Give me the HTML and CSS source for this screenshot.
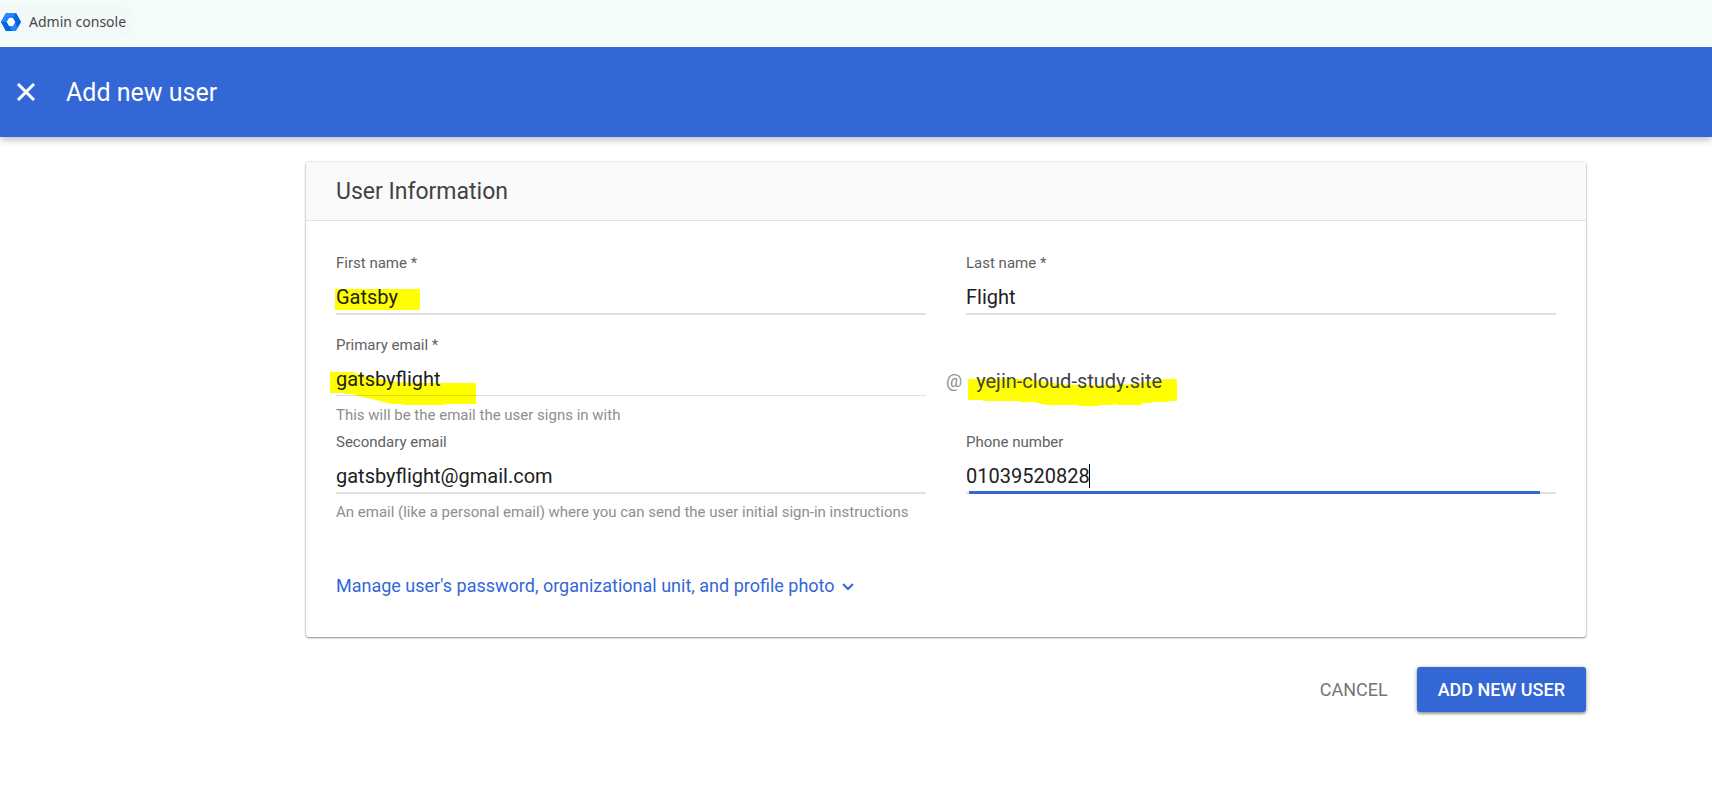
FILE: index.html
```html
<!DOCTYPE html>
<html lang="en">
<head>
<meta charset="utf-8">
<title>Admin console</title>
<link rel="stylesheet" href="styles.css">
</head>
<body>
<nav class="bookmarks">
  <a class="bookmark" href="#">
    <svg class="bookmark-icon" viewBox="0 0 20 18" aria-hidden="true">
      <path fill="#2684fc" d="M5 0H15L20 9L15 18H5L0 9Z"/>
      <path fill="#0066da" d="M15 0L20 9L16.500 14.500L11.500 5Z"/>
      <path fill="#0066da" d="M5 18L0 9L3.500 3.500L8.500 13L11 18Z"/>
      <path fill="#2684fc" d="M0 9L5 0H11L6 9Z"/>
      <path fill="#fff" d="M8 5H12L14.300 9L12 13H8L5.700 9Z"/>
    </svg>
    <span>Admin console</span>
  </a>
</nav>
<header class="app-bar">
  <button class="close" type="button" aria-label="Close">
    <svg viewBox="0 0 18 18" aria-hidden="true"><path d="M1 1L17 17M17 1L1 17"/></svg>
  </button>
  <h1 class="app-title">Add new user</h1>
</header>
<main class="page">
  <form class="user-form">
    <section class="card">
      <h2 class="card-title">User Information</h2>
      <div class="card-body">
        <div class="fields">
          <div class="field">
            <label for="first">First name *</label>
            <div class="control">
              <svg class="marker marker-first" viewBox="0 0 85 21" aria-hidden="true"><path d="M0 0H85V21H0Z"/></svg>
              <input id="first" type="text" value="Gatsby">
            </div>
          </div>
          <div class="field">
            <label for="last">Last name *</label>
            <div class="control"><input id="last" type="text" value="Flight"></div>
          </div>
          <div class="field">
            <label for="primary">Primary email *</label>
            <div class="control">
              <svg class="marker marker-email" viewBox="0 0 146 33" aria-hidden="true"><path d="M0 0H22L38 5L54 8L66 10L84 11H146V32H114V33H73V32H62L54 30L42 27L32 25L22 22H15V21H0Z"/></svg>
              <input id="primary" class="thin" type="text" value="gatsbyflight">
            </div>
            <p class="hint">This will be the email the user signs in with</p>
          </div>
          <div class="domain">
            <span class="at">@</span>
            <span class="domain-name">
              <svg class="marker marker-domain" viewBox="0 0 209 27" aria-hidden="true"><path d="M0 0H62L78 3L94 5L108 6H150L163 5L178 3L190 1L198 0H209V22H199V23H184V24H174V26H149V25H145V26H131V27H110V26H77V25H72V24H67V23H52V22H15V21H0Z"/></svg>
              <span class="domain-text">yejin-cloud-study.site</span>
            </span>
          </div>
          <div class="field">
            <label for="secondary">Secondary email</label>
            <div class="control"><input id="secondary" type="email" value="gatsbyflight@gmail.com"></div>
            <p class="hint">An email (like a personal email) where you can send the user initial sign-in instructions</p>
          </div>
          <div class="field">
            <label for="phone">Phone number</label>
            <div class="control">
              <input id="phone" type="tel" value="01039520828">
              <span class="caret"></span>
              <span class="focus-line"></span>
            </div>
          </div>
        </div>
        <a class="manage" href="#">
          <span>Manage user's password, organizational unit, and profile photo</span>
          <svg viewBox="0 0 12 8" aria-hidden="true"><path d="M1 1L6 6L11 1"/></svg>
        </a>
      </div>
    </section>
    <div class="actions">
      <button class="btn cancel" type="button">CANCEL</button>
      <button class="btn submit" type="submit">ADD NEW USER</button>
    </div>
  </form>
</main>
</body>
</html>
```
FILE: styles.css
```css
* { box-sizing: border-box; }
body {
  margin: 0;
  background: #fff;
  color: #202124;
  font-family: Roboto, "Liberation Sans", sans-serif;
}
.bookmarks {
  position: relative;
  z-index: 1;
  display: flex;
  height: 47px;
  padding-top: 5px;
  background: #f4fbf9;
}
.bookmark {
  display: flex;
  align-items: center;
  gap: 8px;
  height: 33px;
  padding: 0 8px 0 1px;
  border-radius: 0 16px 16px 0;
  background: #f3f9f8;
  color: #474747;
  font-family: "Noto Sans", sans-serif;
  font-size: 14px;
  text-decoration: none;
}
.bookmark-icon { width: 20px; height: 18px; }
.app-bar {
  display: flex;
  align-items: center;
  gap: 30px;
  height: 90px;
  padding: 0 16px;
  background: #3367d6;
  color: #fff;
  box-shadow: 0 2px 8px rgba(0, 0, 0, .3);
}
.close {
  display: flex;
  padding: 0;
  border: 0;
  background: none;
}
.close svg { width: 20px; height: 18px; }
.close path { fill: none; stroke: #fff; stroke-width: 3; }
.app-title { margin: 0; font-size: 25px; font-weight: 400; }
.page { padding: 25px 0 32px 180px; }
.user-form { max-width: 1280px; margin: 0 auto; }
.card {
  border-radius: 3px;
  box-shadow: 0 0 2px rgba(0, 0, 0, .24), 0 1px 2px rgba(0, 0, 0, .4);
}
.card-title {
  margin: 0;
  padding: 2px 30px 0;
  border-bottom: 1px solid #e0e0e0;
  border-radius: 3px 3px 0 0;
  background: #fafafa;
  color: #424242;
  font-size: 23px;
  font-weight: 400;
  line-height: 56px;
}
.card-body { padding: 32px 30px 41px; }
.fields {
  display: grid;
  grid-template-columns: 1fr 1fr;
  column-gap: 40px;
}
.field { padding-bottom: 20px; }
.field:has(.hint) { padding-bottom: 7px; }
.field label {
  display: block;
  color: #616161;
  font-size: 15px;
  line-height: 20px;
}
.control { position: relative; height: 42px; }
.control input {
  position: relative;
  display: block;
  width: 100%;
  height: 42px;
  padding: 8px 0 0;
  border: 0;
  border-bottom: 2px solid #e0e0e0;
  outline: 0;
  background: none;
  color: #212121;
  font: 20px Roboto, "Liberation Sans", sans-serif;
}
.control .thin { height: 41px; border-bottom: 1px solid rgba(0, 0, 0, .12); }
.hint {
  margin: 8px 0 0;
  color: #8e8e8e;
  font-size: 15px;
  line-height: 20px;
}
.marker { position: absolute; fill: #ff0; }
.marker-first { left: -1px; top: 16px; width: 85px; height: 21px; }
.marker-email { left: -6px; top: 17px; width: 146px; height: 33px; }
.marker-domain { left: -8px; top: 8px; width: 209px; height: 27px; }
.domain {
  display: flex;
  align-items: flex-start;
  gap: 14px;
  margin-left: -20px;
  padding-top: 36px;
  font-size: 20px;
  line-height: 20px;
}
.at { color: #8e8e8e; font-size: 18px; }
.domain-name { position: relative; color: #424242; }
.domain-text { position: relative; }
.caret {
  position: absolute;
  left: 123px;
  top: 12px;
  width: 1px;
  height: 24px;
  background: #000;
}
.focus-line {
  position: absolute;
  left: 3px;
  right: 16px;
  bottom: 0;
  height: 3px;
  background: #3367d6;
}
.manage {
  display: inline-flex;
  align-items: center;
  gap: 7px;
  margin-top: 47px;
  color: #3367d6;
  font-size: 18px;
  line-height: 20px;
  text-decoration: none;
}
.manage svg { width: 12px; height: 8px; margin-top: 2px; }
.manage path { fill: none; stroke: currentColor; stroke-width: 2; }
.actions {
  display: flex;
  justify-content: flex-end;
  gap: 8px;
  margin-top: 30px;
}
.btn {
  height: 45px;
  padding: 0 21px;
  border: 0;
  border-radius: 3px;
  background: none;
  font: 18px Roboto, "Liberation Sans", sans-serif;
}
.cancel { color: #757575; }
.submit {
  background: #3367d6;
  color: #fff;
  font-weight: 500;
  box-shadow: 0 1px 4px rgba(0, 0, 0, .35), 0 2px 2px rgba(0, 0, 0, .2);
}
```
